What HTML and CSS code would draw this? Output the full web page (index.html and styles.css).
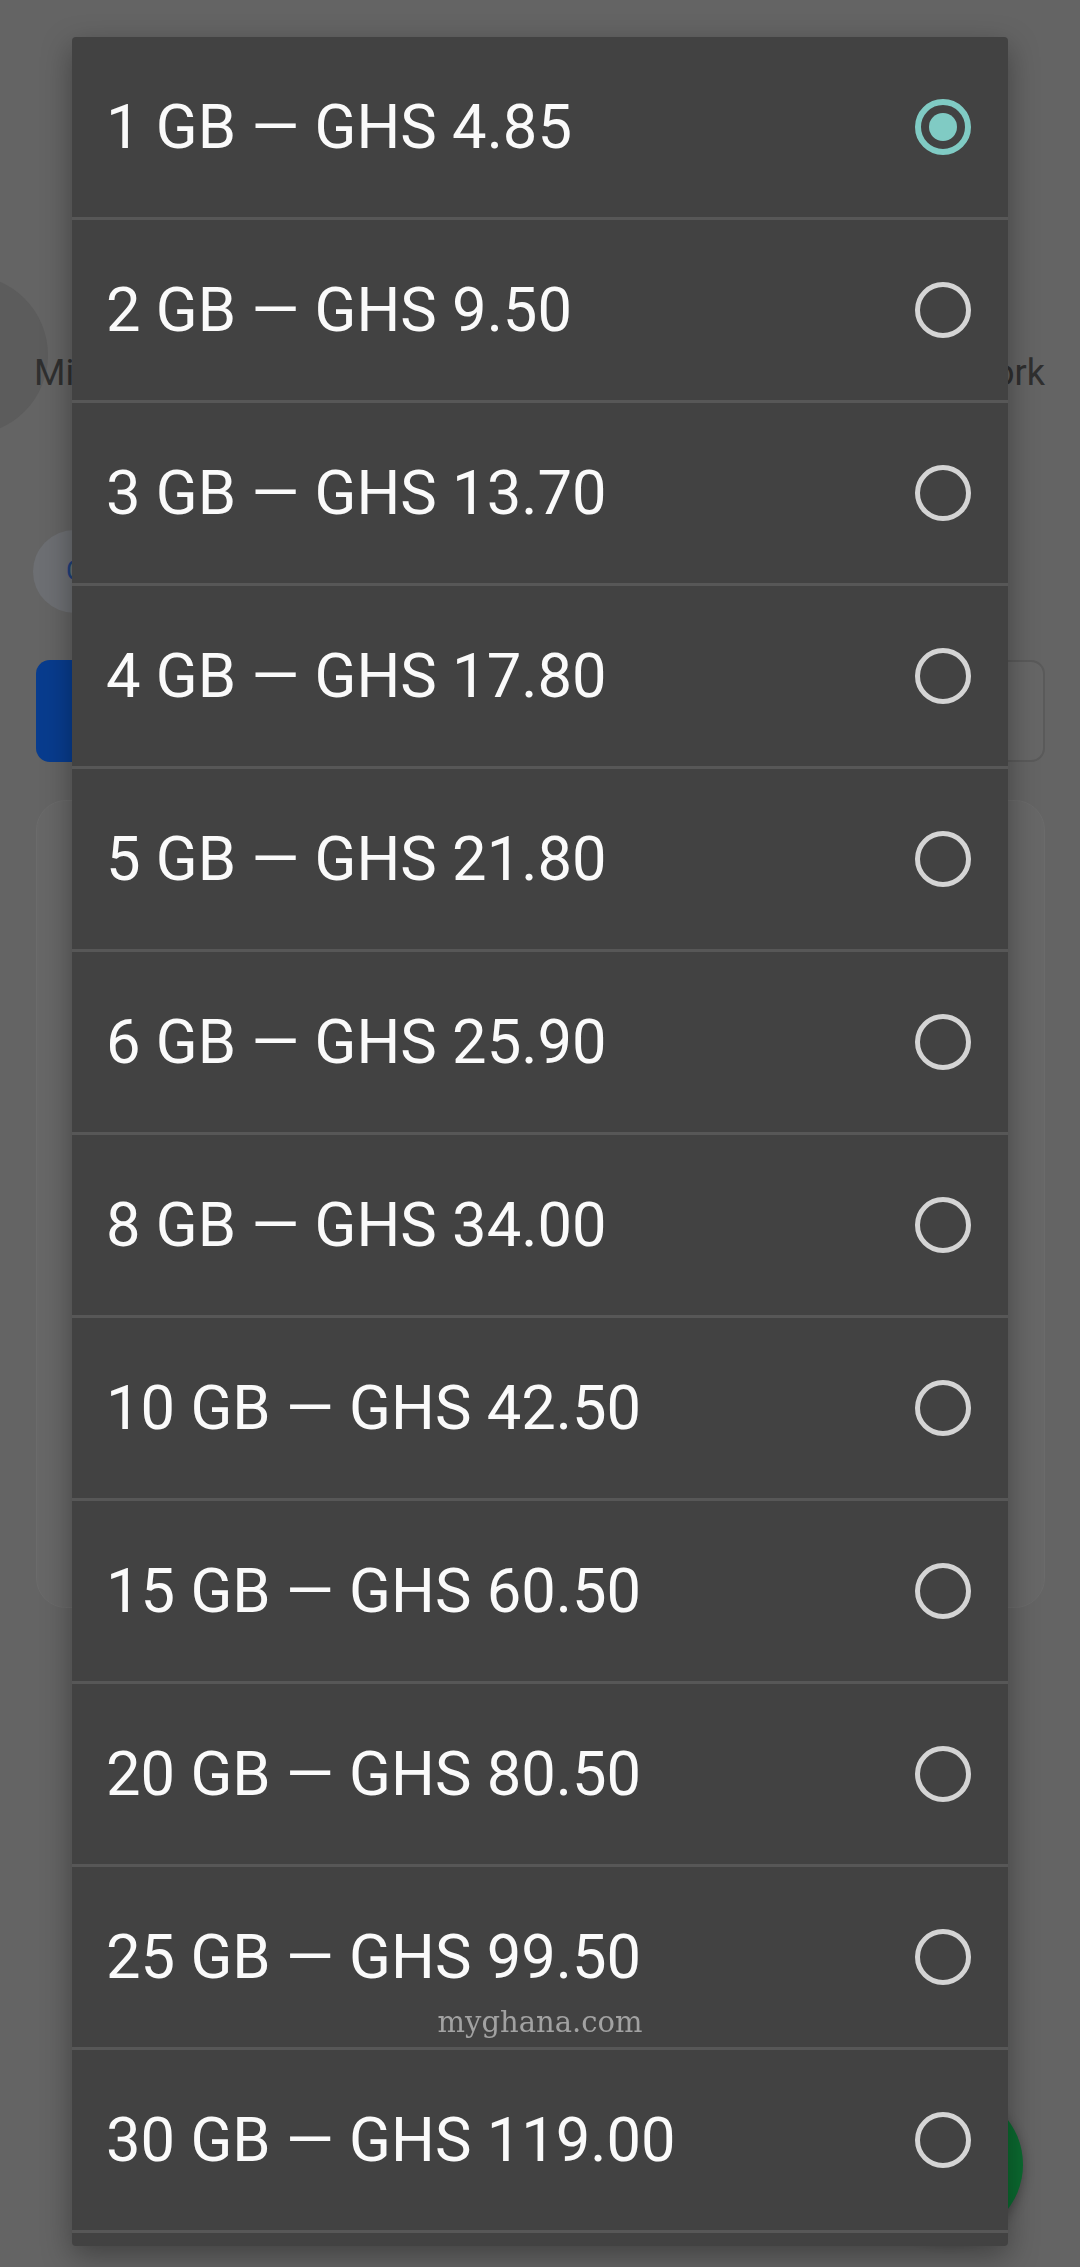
FILE: index.html
```html
<!DOCTYPE html>
<html lang="en">
<head>
  <meta charset="UTF-8" />
  <meta name="viewport" content="width=device-width, initial-scale=1.0" />
  <title>Buy Data Bundle</title>
  <link rel="stylesheet" href="styles.css">
</head>
<body>
  <div class="page">
    <div class="networks">
      <div class="net">
        <div class="net-logo"></div>
        <span class="net-name">Mi-Fi</span>
      </div>
      <span class="net-name right">Network</span>
    </div>

    <div class="chip">Check bundles</div>

    <div class="actions">
      <div class="btn-primary"></div>
      <div class="field"></div>
    </div>

    <div class="card"></div>
  </div>

  <div class="fab"></div>

  <div class="dialog">
    <ul class="options">
      <li class="option selected">1 GB — GHS 4.85<span class="radio"></span></li>
      <li class="option">2 GB — GHS 9.50<span class="radio"></span></li>
      <li class="option">3 GB — GHS 13.70<span class="radio"></span></li>
      <li class="option">4 GB — GHS 17.80<span class="radio"></span></li>
      <li class="option">5 GB — GHS 21.80<span class="radio"></span></li>
      <li class="option">6 GB — GHS 25.90<span class="radio"></span></li>
      <li class="option">8 GB — GHS 34.00<span class="radio"></span></li>
      <li class="option">10 GB — GHS 42.50<span class="radio"></span></li>
      <li class="option">15 GB — GHS 60.50<span class="radio"></span></li>
      <li class="option">20 GB — GHS 80.50<span class="radio"></span></li>
      <li class="option">25 GB — GHS 99.50<span class="radio"></span></li>
      <li class="option">30 GB — GHS 119.00<span class="radio"></span></li>
      <li class="option"></li>
    </ul>
  </div>

  <div class="watermark">myghana.com</div>
</body>
</html>
```

FILE: styles.css
```css
body {
  margin: 0;
  background: #646464;
  font-family: Roboto, "Liberation Sans", sans-serif;
  overflow: hidden;
}

/* page behind the dialog, already dimmed */
.page {
  padding: 275px 35px 0 36px;
}
.networks {
  display: flex;
  justify-content: space-between;
  height: 160px;
}
.net {
  display: flex;
}
.net-logo {
  width: 160px;
  height: 160px;
  margin-left: -148px;
  border-radius: 50%;
  background: #5c5c5c;
  flex-shrink: 0;
}
.net-name {
  align-self: flex-end;
  margin: 0 0 41px -14px;
  font-size: 36px;
  color: #2f2f2f;
  white-space: nowrap;
}
.net-name.right {
  margin-left: 0;
}
.chip {
  margin: 95px 0 0 -3px;
  width: 360px;
  height: 83px;
  box-sizing: border-box;
  padding-left: 33px;
  line-height: 83px;
  border-radius: 42px;
  background: #6d6f73;
  color: #20407c;
  font-size: 27px;
}
.actions {
  display: flex;
  justify-content: space-between;
  margin-top: 47px;
  height: 102px;
}
.btn-primary {
  width: 470px;
  border-radius: 14px;
  background: #083c8e;
}
.field {
  width: 470px;
  box-sizing: border-box;
  border: 2px solid #5a5a5a;
  border-radius: 14px;
  background: #666666;
}
.card {
  margin-top: 38px;
  height: 808px;
  box-sizing: border-box;
  border: 1px solid #6b6b6b;
  border-radius: 30px;
  background: #676767;
}
.fab {
  position: fixed;
  right: 57px;
  bottom: 29px;
  width: 147px;
  height: 147px;
  border-radius: 50%;
  background: #0b6a30;
  box-shadow: 0 4px 12px rgba(0,0,0,0.3);
}

/* the choice dialog */
.dialog {
  position: fixed;
  top: 37px;
  left: 72px;
  width: 936px;
  bottom: 21px;
  background: #424242;
  border-radius: 4px;
  overflow: hidden;
  box-shadow: 0 10px 30px rgba(0,0,0,0.35);
}
.options {
  list-style: none;
  margin: 0;
  padding: 0;
}
.option {
  display: flex;
  align-items: center;
  justify-content: space-between;
  height: 180px;
  padding: 0 37px 0 34px;
  border-bottom: 3px solid #575757;
  color: #fafafa;
  font-size: 61.5px;
}
.radio {
  width: 56px;
  height: 56px;
  box-sizing: border-box;
  border: 5px solid #d4d4d4;
  border-radius: 50%;
  display: flex;
  align-items: center;
  justify-content: center;
}
.selected .radio {
  border: 6px solid #80cbc4;
}
.selected .radio::after {
  content: "";
  width: 28px;
  height: 28px;
  border-radius: 50%;
  background: #80cbc4;
}

.watermark {
  position: fixed;
  top: 2008px;
  left: 0;
  right: 0;
  text-align: center;
  font-family: "DejaVu Serif", serif;
  font-size: 29px;
  line-height: 29px;
  color: #a2a2a2;
}
```
